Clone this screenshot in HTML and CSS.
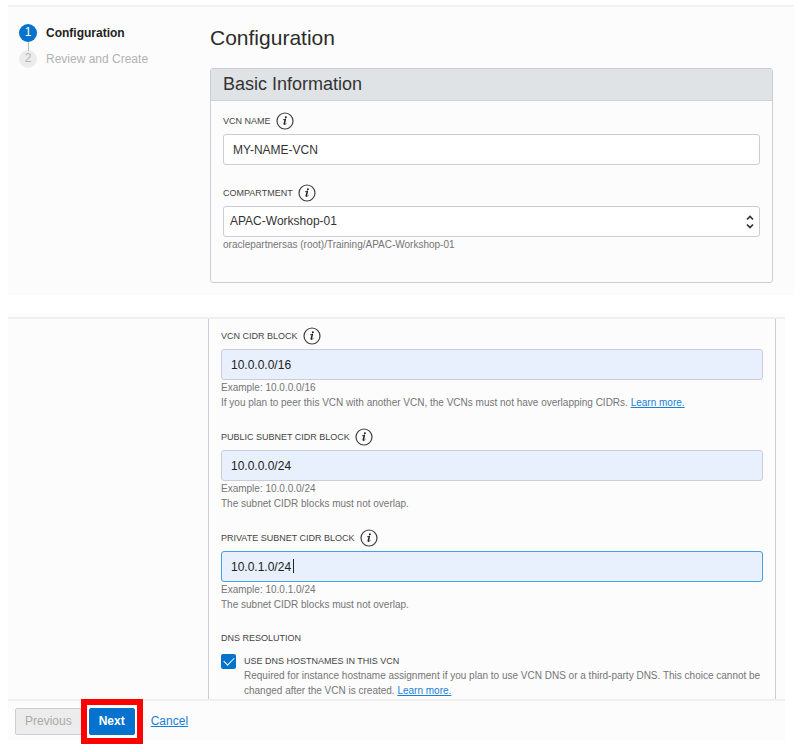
FILE: index.html
```html
<!DOCTYPE html>
<html lang="en">
<head>
<meta charset="utf-8">
<title>Configuration</title>
<link rel="stylesheet" href="styles.css">
</head>
<body>
<svg class="defs" aria-hidden="true">
  <symbol id="info" viewBox="0 0 18 18">
    <circle cx="9" cy="9" r="8" fill="none" stroke="#3f3f3f" stroke-width="1.2"/>
    <circle cx="9.9" cy="5.2" r="1" fill="#222"/>
    <path d="M7.4 7.7 9.4 7.3" fill="none" stroke="#222" stroke-width=".8" stroke-linecap="round"/>
    <path d="M9.3 7.6 8.2 12" fill="none" stroke="#222" stroke-width="1.5" stroke-linecap="round"/>
    <path d="M8.2 12.4Q8.8 13.2 10.3 11.5" fill="none" stroke="#222" stroke-width=".8" stroke-linecap="round"/>
  </symbol>
</svg>

<section class="screen screen-top">
  <ol class="steps">
    <li class="step current"><span class="num">1</span>Configuration</li>
    <li class="step"><span class="num">2</span>Review and Create</li>
  </ol>
  <main class="content">
    <h1>Configuration</h1>
    <div class="panel">
      <h2>Basic Information</h2>
      <div class="panel-body">
        <div class="field">
          <div class="label-row"><label for="name">VCN NAME</label><button class="info" type="button" aria-label="VCN name help"><svg><use href="#info"/></svg></button></div>
          <input class="box" id="name" type="text" value="MY-NAME-VCN">
        </div>
        <div class="field">
          <div class="label-row"><label for="comp">COMPARTMENT</label><button class="info" type="button" aria-label="Compartment help"><svg><use href="#info"/></svg></button></div>
          <div class="control">
            <select class="box" id="comp"><option>APAC-Workshop-01</option></select>
            <svg class="arrows" viewBox="0 0 8 14"><path d="M1 4.5 4 1.5 7 4.5M1 9.5 4 12.5 7 9.5" fill="none" stroke="#333" stroke-width="1.7"/></svg>
          </div>
          <p class="hint">oraclepartnersas (root)/Training/APAC-Workshop-01</p>
        </div>
      </div>
    </div>
  </main>
</section>

<section class="screen screen-bottom">
  <div class="cidr-panel">
    <div class="field">
      <div class="label-row"><label for="vcn">VCN CIDR BLOCK</label><button class="info" type="button" aria-label="VCN CIDR help"><svg><use href="#info"/></svg></button></div>
      <input class="box filled" id="vcn" type="text" value="10.0.0.0/16">
      <p class="hint">Example: 10.0.0.0/16</p>
      <p class="hint">If you plan to peer this VCN with another VCN, the VCNs must not have overlapping CIDRs. <a href="#">Learn more.</a></p>
    </div>
    <div class="field">
      <div class="label-row"><label for="public">PUBLIC SUBNET CIDR BLOCK</label><button class="info" type="button" aria-label="Public subnet help"><svg><use href="#info"/></svg></button></div>
      <input class="box filled" id="public" type="text" value="10.0.0.0/24">
      <p class="hint">Example: 10.0.0.0/24</p>
      <p class="hint">The subnet CIDR blocks must not overlap.</p>
    </div>
    <div class="field">
      <div class="label-row"><label for="private">PRIVATE SUBNET CIDR BLOCK</label><button class="info" type="button" aria-label="Private subnet help"><svg><use href="#info"/></svg></button></div>
      <div class="control">
        <input class="box filled active" id="private" type="text" value="10.0.1.0/24">
        <span class="caret"></span>
      </div>
      <p class="hint">Example: 10.0.1.0/24</p>
      <p class="hint">The subnet CIDR blocks must not overlap.</p>
    </div>
    <fieldset class="dns">
      <legend>DNS RESOLUTION</legend>
      <div class="check-row">
        <input type="checkbox" id="dns" checked>
        <div>
          <label for="dns">USE DNS HOSTNAMES IN THIS VCN</label>
          <p class="hint">Required for instance hostname assignment if you plan to use VCN DNS or a third-party DNS. This choice cannot be changed after the VCN is created. <a href="#">Learn more.</a></p>
        </div>
      </div>
    </fieldset>
  </div>
  <footer class="actions">
    <button class="btn" type="button" disabled>Previous</button>
    <span class="highlight"><button class="btn primary" type="button">Next</button></span>
    <a class="cancel" href="#">Cancel</a>
  </footer>
</section>
</body>
</html>
```
FILE: styles.css
```css
* { box-sizing: border-box; }
body {
  margin: 0;
  padding-bottom: 12px;
  background: #fff;
  color: #333;
  font: 12px/15px "Liberation Sans", Arial, sans-serif;
}
h1, h2, p, ol, fieldset { margin: 0; padding: 0; }
button, input, select { margin: 0; font: inherit; color: inherit; }
.defs { position: absolute; width: 0; height: 0; }
a { color: #1a7fd6; }

.screen { background: #fcfcfc; margin-left: 8px; }
.screen-top {
  display: grid;
  grid-template-columns: 202px 1fr;
  margin-top: 5px;
  margin-right: 17px;
  padding: 17px 21px 12px 0;
  border-top: 2px solid #f2f2f2;
}

.steps { list-style: none; padding-left: 11px; }
.step {
  display: flex;
  align-items: center;
  gap: 9px;
  height: 18px;
  margin-bottom: 8px;
  color: #b3b3b3;
}
.step.current { position: relative; color: #222; font-weight: bold; }
.step.current::after {
  content: "";
  position: absolute;
  left: 9px;
  top: 18px;
  width: 1px;
  height: 9px;
  background: #bbb;
}
.num {
  width: 18px;
  height: 18px;
  border-radius: 50%;
  background: #ececec;
  line-height: 17px;
  text-align: center;
  font-weight: normal;
}
.current .num { background: #0572ce; color: #fff; }

h1 { font-size: 21px; font-weight: normal; line-height: 28px; margin-bottom: 16px; color: #2c2c2c; }
.panel { border: 1px solid #cacdd5; border-radius: 3px; }
h2 {
  padding: 4px 12px;
  background: #dfe3e6;
  border-bottom: 1px solid #cdd3d8;
  font-size: 18px;
  font-weight: normal;
  line-height: 23px;
}
.panel-body { padding: 11px 12px 30px; }
.field + .field { margin-top: 19px; }
.label-row { display: flex; align-items: center; gap: 5px; height: 18px; margin-bottom: 4px; }
label, legend { font-size: 9px; line-height: 14px; color: #444; }
.info { width: 18px; height: 18px; padding: 0; border: 0; background: none; }
.info svg { display: block; width: 18px; height: 18px; }
.box {
  display: block;
  width: 100%;
  height: 31px;
  padding: 0 9px;
  border: 1px solid #cacdd5;
  border-radius: 3px;
  background: #fff;
  outline: 0;
}
select.box { appearance: none; padding: 0 6px; }
.box.filled { background: #e8effd; color: #222; }
.box.active { border-color: #4a9de6; }
.control { position: relative; }
.arrows { position: absolute; right: 6px; top: 9px; width: 8px; height: 14px; }
.caret { position: absolute; left: 72px; top: 8px; width: 1px; height: 14px; background: #222; }
.hint { font-size: 10px; line-height: 15px; color: #757575; }

.screen-bottom { margin-top: 18px; margin-right: 26px; padding-top: 4px; }
.screen-bottom::before { content: ""; display: block; height: 2px; background: #f0f0f0; }
.cidr-panel {
  margin: 0 9px 0 200px;
  padding: 8px 12px 1px;
  border: solid #cacdd5;
  border-width: 0 1px;
}
.cidr-panel .field + .field { margin-top: 18px; }
.dns { border: 0; margin-top: 19px; }
legend { padding: 0; }
.check-row { display: flex; align-items: flex-start; gap: 8px; margin-top: 9px; }
.check-row label { display: block; }
#dns {
  appearance: none;
  flex: none;
  width: 15px;
  height: 15px;
  border-radius: 2px;
  background: #0572ce;
  display: grid;
  place-items: center;
}
#dns::before {
  content: "";
  width: 9px;
  height: 5px;
  margin-bottom: 3px;
  border: solid #fff;
  border-width: 0 0 1px 1px;
  transform: rotate(-45deg);
}

.actions {
  display: flex;
  align-items: center;
  gap: 7px;
  padding: 7px 7px 5px;
  border-top: 2px solid #f0f0f0;
}
.btn {
  height: 27px;
  padding: 0 9px;
  border: 1px solid #cacdd5;
  border-radius: 2px;
  background: #ececec;
  color: #aaa;
}
.btn.primary { position: relative; z-index: 1; border-color: #0572ce; background: #0572ce; color: #fff; font-weight: bold; }
.highlight { position: relative; }
.highlight::before {
  content: "";
  position: absolute;
  inset: -9px -8px;
  border: 6px solid #f00;
  background: #fff;
}
.cancel { margin-left: 9px; }
```
